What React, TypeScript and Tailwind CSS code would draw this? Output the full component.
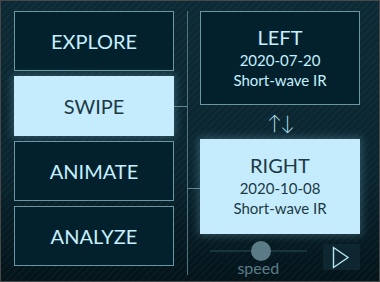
import React from "react";

const font = { fontFamily: "Lato, 'Noto Sans', sans-serif" };

function ModeButton({ label, active }: { label: string; active?: boolean }) {
  return (
    <div
      className={
        active
          ? "h-[60px] flex items-center justify-center bg-[#c4ecfc] text-[#1d3945] shadow-[0_0_8px_2px_rgba(150,215,240,0.25)] text-[20px]"
          : "h-[60px] flex items-center justify-center bg-[#03212d] border border-[#6a97a4] text-[#c6f0ff] text-[20px]"
      }
    >
      {label}
    </div>
  );
}

export default function App() {
  return (
    <div
      className="w-[380px] h-[282px] border border-[#484848] overflow-hidden bg-[repeating-linear-gradient(135deg,rgba(255,255,255,0.025)_0px,rgba(255,255,255,0.025)_2px,rgba(0,0,0,0)_2px,rgba(0,0,0,0)_5px),linear-gradient(180deg,#0c2a35_0%,#0a2530_60%,#03141a_100%)]"
      style={font}
    >
      <div className="flex pl-[13px] pt-[10px]">
        <div className="w-[160px] flex flex-col gap-[5px]">
          <ModeButton label="EXPLORE" />
          <ModeButton label="SWIPE" active />
          <ModeButton label="ANIMATE" />
          <ModeButton label="ANALYZE" />
        </div>

        <div className="w-[26px] relative h-[264px] flex justify-center">
          <div className="w-px h-full bg-[#4f7480]" />
          <div className="absolute left-0 top-[95px] w-[13px] h-px bg-[#5f8894]" />
          <div className="absolute right-0 top-[177px] w-[13px] h-px bg-[#5f8894]" />
        </div>

        <div className="w-[160px] flex flex-col">
          <div className="h-[94px] border border-[#6a97a4] bg-[#03212d] flex flex-col items-center pt-[13px] text-[#c6f0ff]">
            <div className="text-[20px] leading-[24px]">LEFT</div>
            <div className="text-[15px] leading-[20px] mt-[1px]">2020-07-20</div>
            <div className="text-[15px] leading-[20px]">Short-wave IR</div>
          </div>
          <div className="h-[34px] flex items-center justify-center text-[#b9e6f5] text-[20px] leading-none">
            <span className="tracking-[-2px] font-light">↑↓</span>
          </div>
          <div className="h-[95px] bg-[#c4ecfc] shadow-[0_0_8px_2px_rgba(150,215,240,0.25)] flex flex-col items-center pt-[14px] text-[#1d3945]">
            <div className="text-[20px] leading-[24px]">RIGHT</div>
            <div className="text-[15px] leading-[20px] mt-[1px]">2020-10-08</div>
            <div className="text-[15px] leading-[20px]">Short-wave IR</div>
          </div>
          <div className="flex items-start mt-[10px]">
            <div className="w-[98px] ml-[10px] flex flex-col items-center relative">
              <div className="w-full h-[2px] bg-[#17343f] mt-[6px]" />
              <div className="absolute top-[-3px] left-[41px] w-[20px] h-[20px] rounded-full bg-[#5b7c87]" />
              <div className="text-[16px] leading-[18px] text-[#5b7c87] mt-[7px]">speed</div>
            </div>
            <div className="ml-[16px] w-[38px] h-[26px] bg-[#0d2630] flex items-center justify-center">
              <svg width="18" height="23" viewBox="0 0 18 23">
                <path d="M1.5 1.5 L16 11.5 L1.5 21.5 Z" fill="none" stroke="#b5e3f1" strokeWidth="1.4" strokeLinejoin="miter" />
              </svg>
            </div>
          </div>
        </div>
      </div>
    </div>
  );
}
